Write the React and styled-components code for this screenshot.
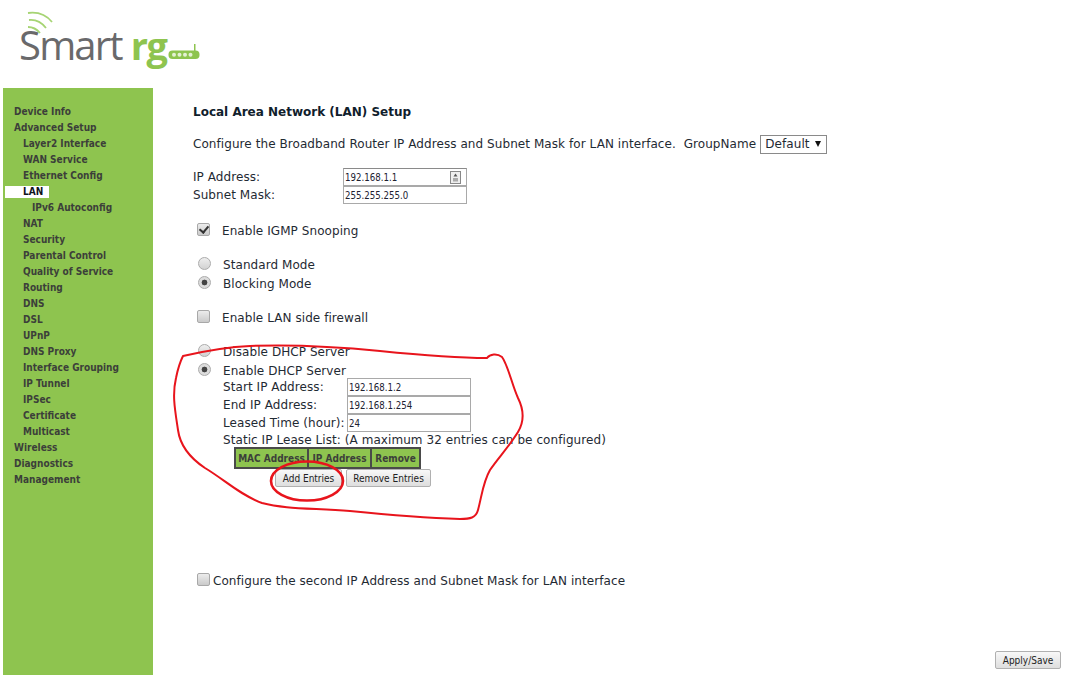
import React from "react";
import styled, { createGlobalStyle } from "styled-components";

const Global = createGlobalStyle`
  html, body { margin: 0; padding: 0; background: #fff; }
  body { font-family: "DejaVu Sans", Verdana, sans-serif; font-size: 12px; letter-spacing: 0.07px; color: #1f2a33; }
`;

const Page = styled.div`
  position: relative;
  width: 1066px;
  height: 675px;
  overflow: hidden;
  display: flex;
  flex-direction: column;
`;
const Header = styled.header`
  height: 88px;
  flex: none;
  padding-left: 19px;
  box-sizing: border-box;
`;
const Logo = styled.div`
  position: relative;
  display: flex;
  align-items: baseline;
  width: 190px;
  height: 88px;
  padding-top: 21px;
  box-sizing: border-box;
`;
const LogoWaves = styled.svg`
  position: absolute;
  left: 6px;
  top: 8px;
`;
const LogoSmart = styled.span`
  font-family: "Open Sans", sans-serif;
  font-weight: 400;
  font-size: 40px;
  line-height: 48px;
  letter-spacing: -1.8px;
  color: #69696b;
`;
const LogoRg = styled.span`
  font-family: "Open Sans", sans-serif;
  font-weight: 700;
  font-size: 38px;
  line-height: 48px;
  letter-spacing: -1.5px;
  color: #8ec44f;
  margin-left: 9px;
`;
const LogoRouter = styled.svg`
  margin-left: 1px;
`;
const Body = styled.div`
  flex: 1;
  display: flex;
  padding-left: 3px;
  min-height: 0;
`;
const Sidebar = styled.nav`
  width: 150px;
  flex: none;
  background: #8ec44f;
  padding-top: 16px;
  box-sizing: border-box;
`;
const NavItem = styled.div`
  height: 16px;
  line-height: 16px;
  font-family: "DejaVu Sans Condensed", "DejaVu Sans", sans-serif;
  font-size: 10px;
  letter-spacing: 0;
  font-weight: 700;
  white-space: nowrap;
  color: #3c3f3a;
  padding-left: ${(p) => 11 + p.$level * 9}px;
`;
const ActiveItem = styled.div`
  height: 16px;
  display: flex;
  align-items: center;
  padding-left: 2px;
`;
const ActiveLabel = styled.span`
  display: block;
  width: 44px;
  height: 12px;
  line-height: 12px;
  box-sizing: border-box;
  padding-left: 18px;
  background: #fff;
  color: #10141c;
  font-family: "DejaVu Sans Condensed", "DejaVu Sans", sans-serif;
  font-size: 10px;
  letter-spacing: 0;
  font-weight: 700;
`;
const Main = styled.main`
  flex: 1;
  display: flex;
  flex-direction: column;
  padding: 15px 5px 6px 40px;
  min-width: 0;
`;
const Row = styled.div`
  display: flex;
  align-items: center;
  height: 18px;
  line-height: 18px;
  white-space: nowrap;
  margin-top: ${(p) => p.$mt || 0}px;
  padding-left: ${(p) => p.$pl || 0}px;
`;
const LeaseBlock = styled.div`
  padding-left: 30px;
`;
const Title = styled.h1`
  margin: 0;
  font-size: 12px;
  font-weight: 700;
  letter-spacing: 0;
  color: #10202c;
`;
const FieldLabel = styled.span`
  width: ${(p) => p.$w}px;
  flex: none;
`;
const TextBox = styled.div`
  position: relative;
  width: 124px;
  height: 18px;
  box-sizing: border-box;
  border: 1px solid #a9a9a9;
  border-top-color: ${(p) => (p.$dark ? "#8a8a8a" : "#a9a9a9")};
  font-family: "DejaVu Sans Condensed", "DejaVu Sans", sans-serif;
  font-size: 9.6px;
  letter-spacing: 0;
  line-height: 17px;
  padding-left: 1px;
  color: #202030;
  background: #fff;
`;
const Spin = styled.svg`
  position: absolute;
  right: 5px;
  top: 2px;
`;
const Select = styled.div`
  display: flex;
  align-items: center;
  justify-content: space-between;
  width: 67px;
  height: 19px;
  box-sizing: border-box;
  margin-left: 4px;
  padding: 0 5px 0 4px;
  border: 1px solid #8a8a8a;
  background: #fff;
`;
const Caret = styled.span`
  width: 0;
  height: 0;
  border-left: 3.5px solid transparent;
  border-right: 3.5px solid transparent;
  border-top: 6px solid #111;
`;
const Box = styled.input`
  appearance: none;
  flex: none;
  width: 13px;
  height: 13px;
  margin: -3px ${(p) => p.$gap || 12}px 0 4px;
  box-sizing: border-box;
  border: 1px solid #a8a8a8;
  border-radius: 2px;
  background: linear-gradient(#ececec, #cacaca);
  position: relative;
  &:checked::after {
    content: "";
    position: absolute;
    left: 3px;
    top: 0px;
    width: 4px;
    height: 7px;
    border: solid #333;
    border-width: 0 2px 2px 0;
    transform: rotate(40deg);
  }
`;
const Radio = styled.input`
  appearance: none;
  flex: none;
  width: 13px;
  height: 13px;
  margin: -3px 12px 0 5px;
  box-sizing: border-box;
  border: 1px solid #ababab;
  border-radius: 50%;
  background: ${(p) =>
    p.checked
      ? "radial-gradient(circle, #444 0 2.6px, #dcdcdc 3.2px)"
      : "linear-gradient(#eeeeee, #d2d2d2)"};
`;
const LeaseTable = styled.table`
  border-collapse: collapse;
  margin: -2px 0 0 11px;
  height: 22px;
  table-layout: fixed;
  border: 2px solid #4a4a4a;
`;
const Th = styled.th`
  padding: 0;
  background: #8ec44f;
  border: 2px solid #4a4a4a;
  font-family: "DejaVu Sans Condensed", "DejaVu Sans", sans-serif;
  font-size: 10px;
  letter-spacing: 0;
  font-weight: 700;
  color: #3c3f3a;
  white-space: nowrap;
  width: ${(p) => p.$w}px;
`;
const Buttons = styled.div`
  display: flex;
  gap: 4px;
  margin: 0 0 0 52px;
`;
const Btn = styled.button`
  width: ${(p) => p.$w}px;
  height: 18px;
  padding: 0;
  box-sizing: border-box;
  border: 1px solid #b0b0b0;
  border-radius: 2px;
  background: linear-gradient(#f8f8f8, #dedede);
  font-family: "DejaVu Sans Condensed", "DejaVu Sans", sans-serif;
  font-size: 10px;
  letter-spacing: 0;
  color: #222;
`;
const Footer = styled.div`
  margin-top: auto;
  display: flex;
  justify-content: flex-end;
`;
const Markup = styled.svg`
  position: absolute;
  left: 0;
  top: 0;
  pointer-events: none;
`;

const nav = [
  ["Device Info", 0], ["Advanced Setup", 0], ["Layer2 Interface", 1], ["WAN Service", 1],
  ["Ethernet Config", 1], ["LAN", 1, true], ["IPv6 Autoconfig", 2], ["NAT", 1], ["Security", 1],
  ["Parental Control", 1], ["Quality of Service", 1], ["Routing", 1], ["DNS", 1], ["DSL", 1],
  ["UPnP", 1], ["DNS Proxy", 1], ["Interface Grouping", 1], ["IP Tunnel", 1], ["IPSec", 1],
  ["Certificate", 1], ["Multicast", 1], ["Wireless", 0], ["Diagnostics", 0], ["Management", 0],
];

export default function App() {
  return (
    <Page>
      <Global />
      <Header>
        <Logo>
          <LogoWaves width="40" height="28" viewBox="0 0 40 28" fill="none" stroke="#a6d473" strokeWidth="1.8">
            <path d="M3 5 Q18 3 27 14" />
            <path d="M4 12 Q14 11 21 20" />
            <path d="M3 19 Q10 19 15 25" />
          </LogoWaves>
          <LogoSmart>Smart</LogoSmart>
          <LogoRg>rg</LogoRg>
          <LogoRouter width="32" height="16" viewBox="0 0 32 16">
            <rect x="26" y="0" width="1.5" height="8" fill="#8ec44f" />
            <rect x="0.5" y="6.5" width="31" height="8.5" rx="4" fill="#8ec44f" />
            <circle cx="6" cy="10.7" r="2" fill="#e4f1d4" />
            <circle cx="11.5" cy="10.7" r="2" fill="#e4f1d4" />
            <circle cx="17" cy="10.7" r="2" fill="#e4f1d4" />
            <circle cx="22.5" cy="10.7" r="2" fill="#e4f1d4" />
          </LogoRouter>
        </Logo>
      </Header>
      <Body>
        <Sidebar>
          {nav.map(([label, level, active]) =>
            active ? (
              <ActiveItem key={label}><ActiveLabel>{label}</ActiveLabel></ActiveItem>
            ) : (
              <NavItem key={label} $level={level}>{label}</NavItem>
            )
          )}
        </Sidebar>
        <Main>
          <Row><Title>Local Area Network (LAN) Setup</Title></Row>
          <Row $mt={14}>
            Configure the Broadband Router IP Address and Subnet Mask for LAN interface.&nbsp; GroupName
            <Select>Default<Caret /></Select>
          </Row>
          <Row $mt={15}>
            <FieldLabel $w={150}>IP Address:</FieldLabel>
            <TextBox $dark>
              192.168.1.1
              <Spin width="11" height="13" viewBox="0 0 11 13">
                <rect x="0.5" y="0.5" width="10" height="12" fill="#eee" stroke="#888" />
                <path d="M5.5 2.5 L7.5 5.5 H3.5 Z" fill="#555" />
                <rect x="3" y="7" width="5" height="3.5" fill="#aaa" />
              </Spin>
            </TextBox>
          </Row>
          <Row>
            <FieldLabel $w={150}>Subnet Mask:</FieldLabel>
            <TextBox>255.255.255.0</TextBox>
          </Row>
          <Row $mt={18}><Box type="checkbox" defaultChecked />Enable IGMP Snooping</Row>
          <Row $mt={16}><Radio type="radio" name="mode" />Standard Mode</Row>
          <Row $mt={1}><Radio type="radio" name="mode" checked readOnly />Blocking Mode</Row>
          <Row $mt={16}><Box type="checkbox" />Enable LAN side firewall</Row>
          <Row $mt={16}><Radio type="radio" name="dhcp" />Disable DHCP Server</Row>
          <Row $mt={1}><Radio type="radio" name="dhcp" checked readOnly />Enable DHCP Server</Row>
          <Row $mt={-2} $pl={30}>
            <FieldLabel $w={124}>Start IP Address:</FieldLabel><TextBox>192.168.1.2</TextBox>
          </Row>
          <Row $pl={30}>
            <FieldLabel $w={124}>End IP Address:</FieldLabel><TextBox>192.168.1.254</TextBox>
          </Row>
          <Row $pl={30}>
            <FieldLabel $w={124}>Leased Time (hour):</FieldLabel><TextBox>24</TextBox>
          </Row>
          <Row $mt={-1} $pl={30}>Static IP Lease List: (A maximum 32 entries can be configured)</Row>
          <LeaseBlock>
            <LeaseTable>
              <thead>
                <tr>
                  <Th $w={71}>MAC Address</Th>
                  <Th $w={61}>IP Address</Th>
                  <Th $w={47}>Remove</Th>
                </tr>
              </thead>
            </LeaseTable>
            <Buttons>
              <Btn $w={67}>Add Entries</Btn>
              <Btn $w={85}>Remove Entries</Btn>
            </Buttons>
          </LeaseBlock>
          <Row $mt={85}>
            <Box type="checkbox" $gap={3} />Configure the second IP Address and Subnet Mask for LAN interface
          </Row>
          <Footer><Btn $w={66}>Apply/Save</Btn></Footer>
        </Main>
      </Body>
      <Markup width="1066" height="675" viewBox="0 0 1066 675" fill="none" stroke="#e8141c">
        <path
          strokeWidth="2"
          d="M183 356 C205 351 225 347 250 346 C300 344 340 347 380 351 C420 355 455 358 487 358 C490 354 497 353 502 357 C508 365 512 385 518 398 C524 410 524 422 518 432 C508 448 498 458 490 470 C483 482 482 495 478 510 C476 518 470 519 460 519 C430 518 390 515 350 511 C310 508 285 509 262 503 C240 495 225 480 205 468 C190 458 180 445 178 430 C175 410 172 395 176 378 C178 368 180 362 183 356 Z"
        />
        <ellipse cx="307" cy="481" rx="36" ry="19.5" strokeWidth="2.6" />
      </Markup>
    </Page>
  );
}
